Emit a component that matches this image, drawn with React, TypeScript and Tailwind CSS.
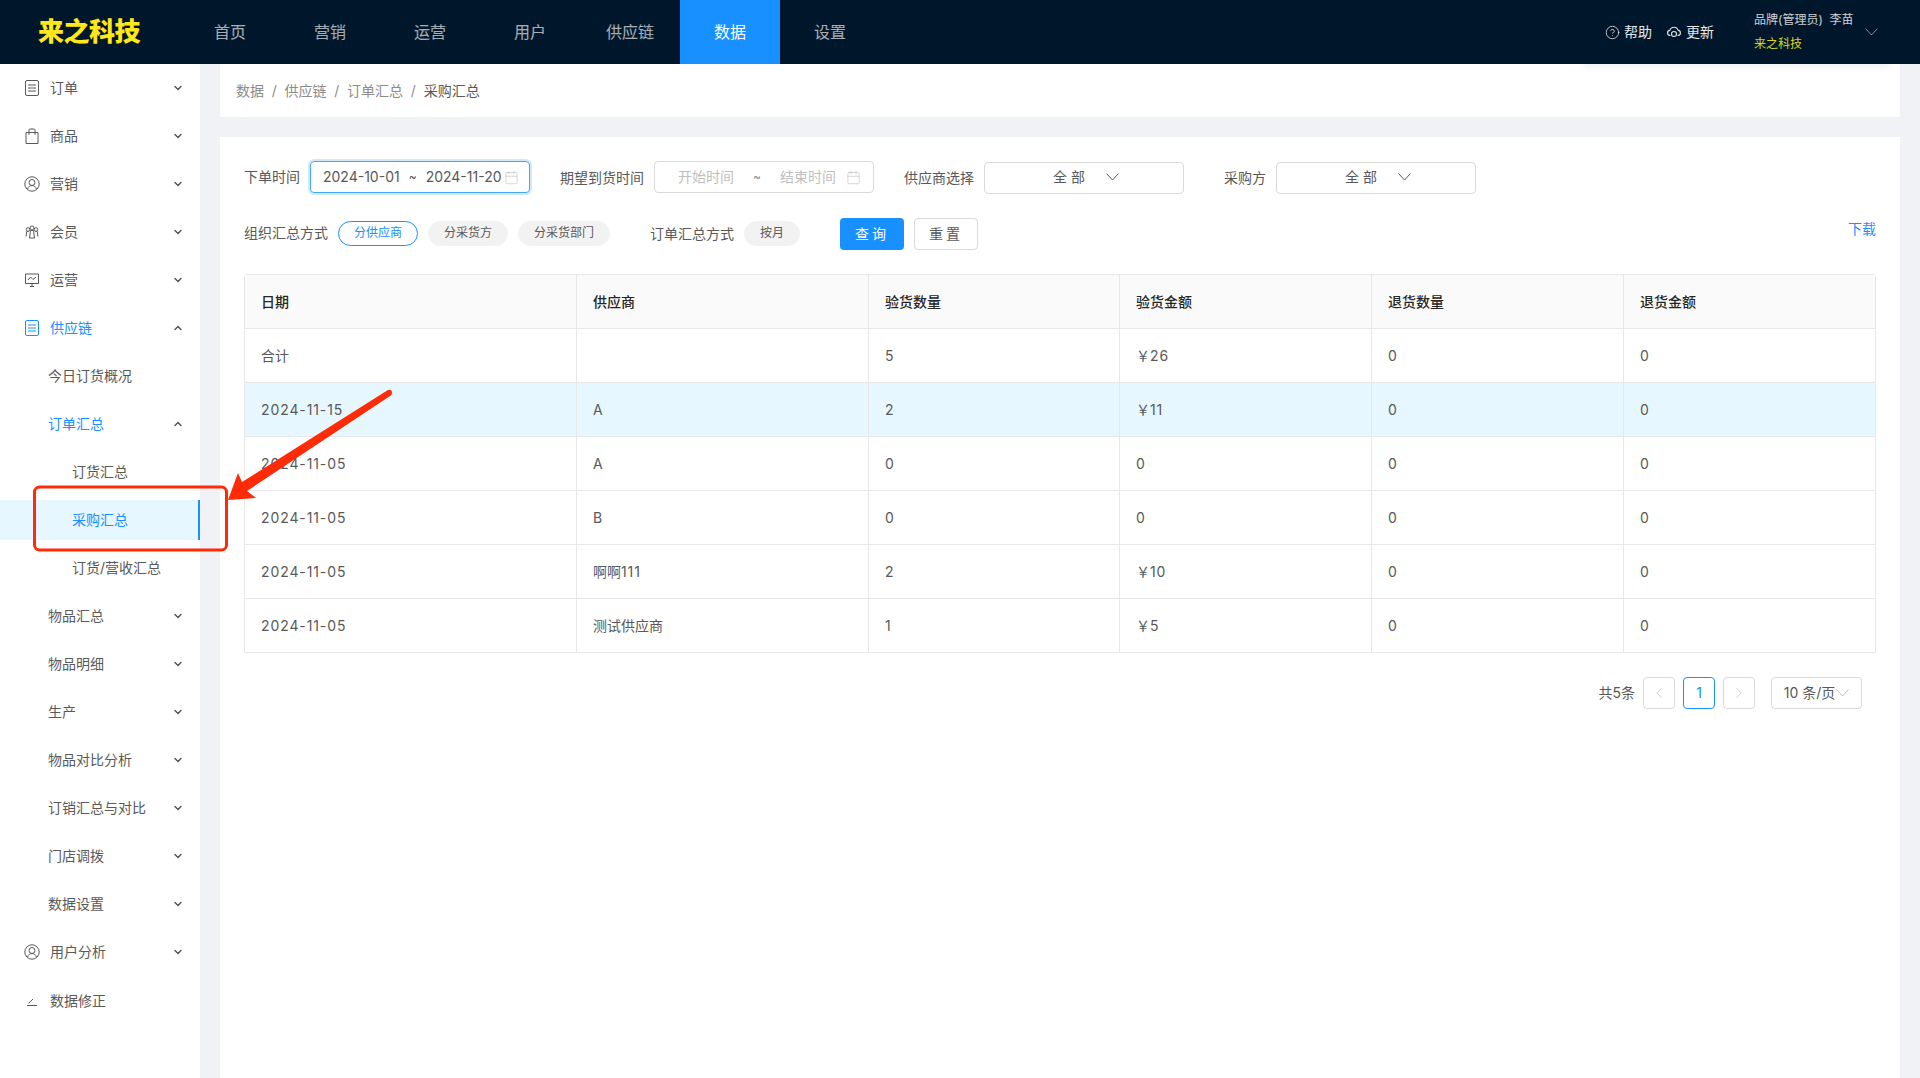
import { ChevronDown, ChevronUp, ChevronLeft, ChevronRight, CircleHelp, Calendar } from "lucide-react";
import type { ReactNode } from "react";

const FONT = "font-['Inter','Noto_Sans_CJK_SC',sans-serif]";

const navItems = ["首页", "营销", "运营", "用户", "供应链", "数据", "设置"];

const IconDoc = () => (
  <svg width="14" height="16" viewBox="0 0 14 16" fill="none" stroke="currentColor" strokeWidth="1">
    <rect x="0.5" y="0.5" width="13" height="15" rx="1.5" />
    <path d="M3 5h8M3 8h8M3 11h8" />
  </svg>
);

const IconBag = () => (
  <svg width="14" height="16" viewBox="0 0 14 16" fill="none" stroke="currentColor" strokeWidth="1">
    <path d="M1 4.500h12v11H1zM4 7V2a1 1 0 0 1 1-1h4a1 1 0 0 1 1 1v5" />
  </svg>
);

const IconUser = () => (
  <svg width="16" height="16" viewBox="0 0 16 16" fill="none" stroke="currentColor" strokeWidth="1">
    <circle cx="8" cy="8" r="7.200" />
    <circle cx="8" cy="6.500" r="3" />
    <path d="M3.500 13c.8-2.400 2.500-3.500 4.500-3.500s3.700 1.100 4.500 3.500" />
  </svg>
);

const IconMember = () => (
  <svg width="14" height="14" viewBox="0 0 14 14" fill="none" stroke="currentColor" strokeWidth="1">
    <circle cx="7" cy="3" r="2" />
    <circle cx="3" cy="4.500" r="1.800" />
    <circle cx="11" cy="4.500" r="1.800" />
    <path d="M4.500 13l1-7.500h3l1 7.500zM1 11.500l.8-5h1.500M13 11.500l-.8-5h-1.500" />
  </svg>
);

const IconScreen = () => (
  <svg width="14" height="14" viewBox="0 0 14 14" fill="none" stroke="currentColor" strokeWidth="1">
    <path d="M.5 1h13v9.500H.5zM3 7l2.500-3 2.500 2.500L11 4M5 13.500h4M7 10.500v3" />
  </svg>
);

const IconPen = () => (
  <svg width="12" height="10" viewBox="0 0 12 10" fill="none" stroke="currentColor" strokeWidth="1">
    <path d="M1 9.500h10M2.500 7.500L7 3" />
  </svg>
);

const IconCloud = ({ className = "" }: { className?: string }) => (
  <svg className={className} width="14" height="12" viewBox="0 0 14 12" fill="none" stroke="currentColor" strokeWidth="1.100">
    <path d="M3.500 9.500C1.800 9.500.6 8.500.6 6.900c0-1.400 1-2.400 2.200-2.500C3.300 2.600 5 1.200 7 1.200s3.700 1.400 4.200 3.200c1.200.1 2.200 1.100 2.200 2.500 0 1.600-1.200 2.600-2.900 2.600" />
    <circle cx="7" cy="8" r="2.500" />
  </svg>
);

// flat V used on the select boxes, wider than the lucide chevron
const IconV = ({ className = "" }: { className?: string }) => (
  <svg className={className} width="13" height="8" viewBox="0 0 13 8" fill="none" stroke="currentColor" strokeWidth="1">
    <path d="M.5 .5L6.500 7L12.500 .5" />
  </svg>
);

const MenuRow = ({
  label,
  icon,
  indent = "pl-12",
  open,
  active,
  arrow = true,
}: {
  label: string;
  icon?: ReactNode;
  indent?: string;
  open?: boolean;
  active?: boolean;
  arrow?: boolean;
}) => (
  <div className={`h-10 my-1 shrink-0 flex items-center pr-[16px] text-sm ${indent} ${active ? "text-[#1890ff]" : "text-[#595959]"}`}>
    {icon && <span className="w-[17px] mr-[10px] flex justify-center items-center">{icon}</span>}
    <span className="flex-1">{label}</span>
    {arrow &&
      (open ? (
        <ChevronUp size={12} strokeWidth={3} className="text-[#595959]" />
      ) : (
        <ChevronDown size={12} strokeWidth={3} className="text-[#595959]" />
      ))}
  </div>
);

const Sidebar = () => (
  <aside className="w-[200px] shrink-0 bg-white flex flex-col">
    <MenuRow label="订单" icon={<IconDoc />} indent="pl-[23px]" />
    <MenuRow label="商品" icon={<IconBag />} indent="pl-[23px]" />
    <MenuRow label="营销" icon={<IconUser />} indent="pl-[23px]" />
    <MenuRow label="会员" icon={<IconMember />} indent="pl-[23px]" />
    <MenuRow label="运营" icon={<IconScreen />} indent="pl-[23px]" />
    <MenuRow label="供应链" icon={<IconDoc />} indent="pl-[23px]" open active />
    <MenuRow label="今日订货概况" arrow={false} />
    <MenuRow label="订单汇总" open active />
    <MenuRow label="订货汇总" indent="pl-[72px]" arrow={false} />
    <div className="h-10 my-1 shrink-0 pl-[72px] flex items-center text-sm text-[#1890ff] bg-[#e6f7ff] border-r-[2px] border-[#1890ff]">
      采购汇总
    </div>
    <MenuRow label="订货/营收汇总" indent="pl-[72px]" arrow={false} />
    <MenuRow label="物品汇总" />
    <MenuRow label="物品明细" />
    <MenuRow label="生产" />
    <MenuRow label="物品对比分析" />
    <MenuRow label="订销汇总与对比" />
    <MenuRow label="门店调拨" />
    <MenuRow label="数据设置" />
    <MenuRow label="用户分析" icon={<IconUser />} indent="pl-[23px]" />
    <div className="mt-px">
      <MenuRow label="数据修正" icon={<IconPen />} indent="pl-[23px]" arrow={false} />
    </div>
  </aside>
);

const Label = ({ children }: { children: ReactNode }) => (
  <span className="text-sm text-[#595959] whitespace-nowrap">{children}</span>
);

const Chip = ({ children, active, w }: { children: ReactNode; active?: boolean; w: string }) => (
  <span
    className={`h-[25px] rounded-full flex items-center justify-center text-xs border ${w} ${
      active ? "border-[#1890ff] text-[#1890ff] bg-white" : "border-[#f2f2f2] bg-[#f2f2f2] text-[#595959]"
    }`}
  >
    {children}
  </span>
);

const SelectBox = () => (
  <div className="w-[200px] h-8 mt-[2px] border border-[#d9d9d9] rounded flex items-center justify-center text-sm text-[#595959]">
    <span className="tracking-[4px] ml-[4px] -mt-[2px]">全部</span>
    <IconV className="ml-[17px] -mt-[2px]" />
  </div>
);

const columns = ["日期", "供应商", "验货数量", "验货金额", "退货数量", "退货金额"];

const rows = [
  ["合计", "", "5", "￥26", "0", "0"],
  ["2024-11-15", "A", "2", "￥11", "0", "0"],
  ["2024-11-05", "A", "0", "0", "0", "0"],
  ["2024-11-05", "B", "0", "0", "0", "0"],
  ["2024-11-05", "啊啊111", "2", "￥10", "0", "0"],
  ["2024-11-05", "测试供应商", "1", "￥5", "0", "0"],
];

// digits in the table run wider than the CJK text
const Cell = ({ value }: { value: string }) => (
  <>
    {value.split(/([0-9-]+)/).map((part, i) =>
      /[0-9]/.test(part) ? (
        <span key={i} className="tracking-[0.9px]">
          {part}
        </span>
      ) : (
        part
      )
    )}
  </>
);

const gridCols = "grid grid-cols-[332px_292px_251px_252px_252px_1fr]";

const Table = () => (
  <div className="mt-6 border border-b-0 border-[#e8e8e8] rounded-t text-sm">
    <div className={`${gridCols} h-[54px] bg-[#fafafa] border-b border-[#e8e8e8]`}>
      {columns.map((c, i) => (
        <div key={c} className={`pl-4 flex items-center font-medium text-[#262626] ${i < 5 ? "border-r border-[#e8e8e8]" : ""}`}>
          {c}
        </div>
      ))}
    </div>
    {rows.map((r, ri) => (
      <div key={ri} className={`${gridCols} h-[54px] border-b border-[#e8e8e8] ${ri === 1 ? "bg-[#e6f7ff]" : ""}`}>
        {r.map((v, i) => (
          <div key={i} className={`pl-4 flex items-center text-[#595959] ${i < 5 ? "border-r border-[#e8e8e8]" : ""}`}>
            <span>
              <Cell value={v} />
            </span>
          </div>
        ))}
      </div>
    ))}
  </div>
);

const Arrow = () => (
  <svg className="absolute left-0 top-0 pointer-events-none" width="420" height="580" viewBox="0 0 420 580">
    <rect x="34.500" y="487" width="192" height="63" rx="5" fill="none" stroke="#ff2a06" strokeWidth="3" />
    <path d="M228 500L238 473L242 482L388 390Q392 389 392 393Q392 395 390 396L247 491L256 498Z" fill="#ff2a06" />
  </svg>
);

export default function App() {
  return (
    <div className={`${FONT} relative h-screen overflow-hidden bg-[#f0f2f5] flex flex-col`}>
      <header className="relative z-10 h-16 shrink-0 bg-[#00162b] flex items-center">
        <div className="w-[180px] pl-[38px] text-[#ffe81a] text-[26px] leading-none font-black whitespace-nowrap tracking-[-0.5px]">
          来之科技
        </div>
        <nav className="flex h-full">
          {navItems.map((n) => (
            <a
              key={n}
              className={`w-[100px] flex items-center justify-center text-base ${
                n === "数据" ? "bg-[#1890ff] text-white" : "text-white/65"
              }`}
            >
              {n}
            </a>
          ))}
        </nav>
        <div className="ml-auto flex items-center text-sm text-white/90">
          <CircleHelp size={15} strokeWidth={1.250} className="mr-[4px]" />
          <span>帮助</span>
          <IconCloud className="ml-[15px]" />
          <span className="ml-[5px]">更新</span>
          <div className="ml-10 w-[111px] text-xs leading-[24px]">
            <div className="text-white/80 whitespace-nowrap">品牌(管理员)&nbsp;&nbsp;李苗</div>
            <div className="text-[#d8d51a]">来之科技</div>
          </div>
          <IconV className="text-white/50 mr-[42px]" />
        </div>
      </header>

      <div className="flex flex-1 min-h-0">
        <Sidebar />
        <main className="relative flex-1 px-5 min-w-0">
          <div className="absolute right-[30px] top-0 w-[307px] h-[3px] -translate-y-[3px] shadow-[0_2px_6px_rgba(0,0,0,0.12)]" />
          <div className="h-[53px] bg-white pl-4 flex items-center text-sm text-[#8c8c8c]">
            <span>数据</span>
            <span className="mx-[7.750px]">/</span>
            <span>供应链</span>
            <span className="mx-[7.750px]">/</span>
            <span>订单汇总</span>
            <span className="mx-[7.750px]">/</span>
            <span className="text-[#595959]">采购汇总</span>
          </div>

          <section className="mt-5 bg-white px-6 pt-6 h-full">
            <div className="flex items-center h-8">
              <Label>下单时间</Label>
              <div className="ml-[10px] w-[220px] h-8 border border-[#40a9ff] rounded shadow-[0_0_0_2px_rgba(24,144,255,0.2)] flex items-center pl-[12px] text-sm text-[#595959] whitespace-nowrap">
                <span>2024-10-01</span>
                <span className="mx-[9px] text-xs">~</span>
                <span>2024-11-20</span>
                <Calendar size={15} strokeWidth={1} className="text-[#bfbfbf] ml-[2px]" />
              </div>
              <div className="ml-[30px]">
                <Label>期望到货时间</Label>
              </div>
              <div className="ml-[10px] w-[220px] h-8 border border-[#d9d9d9] rounded flex items-center pl-[23px] text-sm text-[#bfbfbf] whitespace-nowrap">
                <span>开始时间</span>
                <span className="mx-[19px] text-xs text-[#8c8c8c]">~</span>
                <span>结束时间</span>
                <Calendar size={15} strokeWidth={1} className="ml-[10px]" />
              </div>
              <div className="ml-[30px]">
                <Label>供应商选择</Label>
              </div>
              <div className="ml-[10px]">
                <SelectBox />
              </div>
              <div className="ml-10">
                <Label>采购方</Label>
              </div>
              <div className="ml-[10px]">
                <SelectBox />
              </div>
            </div>

            <div className="mt-6 flex items-center h-8">
              <Label>组织汇总方式</Label>
              <div className="ml-[10px] flex gap-[10px]">
                <Chip active w="w-20">分供应商</Chip>
                <Chip w="w-20">分采货方</Chip>
                <Chip w="w-[92px]">分采货部门</Chip>
              </div>
              <div className="ml-10">
                <Label>订单汇总方式</Label>
              </div>
              <div className="ml-[10px]">
                <Chip w="w-14">按月</Chip>
              </div>
              <button className="ml-10 w-16 h-8 mt-[2px] rounded bg-[#1890ff] text-white text-sm tracking-[3px]">查询</button>
              <button className="ml-[10px] w-16 h-8 mt-[2px] rounded border border-[#d9d9d9] text-[#595959] text-sm tracking-[3px]">
                重置
              </button>
              <a className="ml-auto -mt-[8px] text-sm text-[#1890ff]">下载</a>
            </div>

            <div className="h-px" />
            <Table />

            <div className="mt-6 pr-[14px] flex items-center justify-end text-sm text-[#595959]">
              <span className="mr-2">共5条</span>
              <span className="w-8 h-8 border border-[#d9d9d9] rounded flex items-center justify-center text-[#bfbfbf]">
                <ChevronLeft size={18} strokeWidth={1} />
              </span>
              <span className="ml-2 w-8 h-8 border border-[#1890ff] rounded flex items-center justify-center text-[#1890ff]">1</span>
              <span className="ml-2 w-8 h-8 border border-[#d9d9d9] rounded flex items-center justify-center text-[#bfbfbf]">
                <ChevronRight size={18} strokeWidth={1} />
              </span>
              <span className="ml-4 w-[91px] h-8 border border-[#d9d9d9] rounded flex items-center justify-center">
                10 条/页
                <IconV className="text-[#bfbfbf] ml-[1px]" />
              </span>
            </div>
          </section>
        </main>
      </div>
      <Arrow />
    </div>
  );
}
